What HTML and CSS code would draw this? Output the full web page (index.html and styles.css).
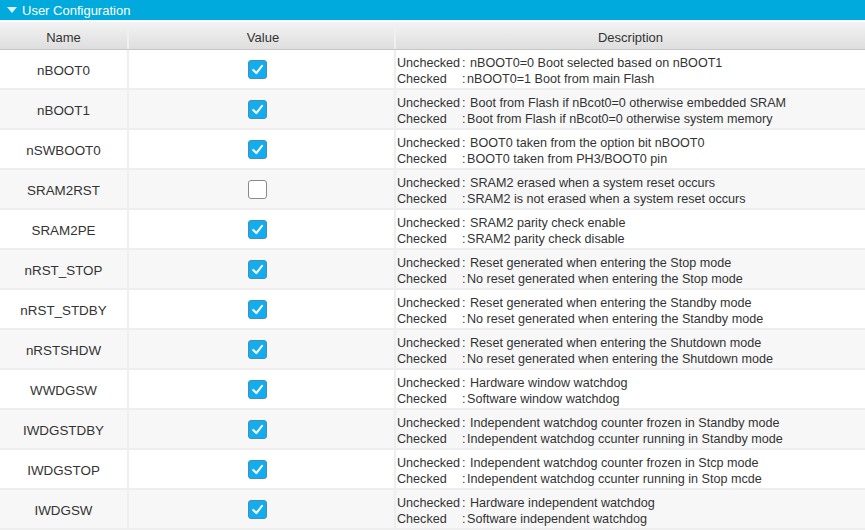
FILE: index.html
```html
<!DOCTYPE html>
<html>
<head>
<meta charset="utf-8">
<link rel="stylesheet" href="styles.css">
</head>
<body>
<div class="panel">
  <div class="titlebar"><span class="caret"></span><span class="title">User Configuration</span></div>
  <div class="table">
    <div class="row head">
      <div class="cell name">Name</div>
      <div class="cell value">Value</div>
      <div class="cell desc-h">Description</div>
    </div>

    <div class="row">
      <div class="cell name">nBOOT0</div>
      <div class="cell value"><span class="cb on"><svg viewBox="0 0 18 18"><path d="M4.5 9.5 L7.8 12.8 L13.8 5.2"/></svg></span></div>
      <div class="cell desc"><div class="line"><span class="lbl u">Unchecked<span class="c">:</span></span>nBOOT0=0 Boot selected based on nBOOT1</div><div class="line"><span class="lbl">Checked<span class="c">:</span></span>nBOOT0=1 Boot from main Flash</div></div>
    </div>
    <div class="row alt">
      <div class="cell name">nBOOT1</div>
      <div class="cell value"><span class="cb on"><svg viewBox="0 0 18 18"><path d="M4.5 9.5 L7.8 12.8 L13.8 5.2"/></svg></span></div>
      <div class="cell desc"><div class="line"><span class="lbl u">Unchecked<span class="c">:</span></span>Boot from Flash if nBcot0=0 otherwise embedded SRAM</div><div class="line"><span class="lbl">Checked<span class="c">:</span></span>Boot from Flash if nBcot0=0 otherwise system memory</div></div>
    </div>
    <div class="row">
      <div class="cell name">nSWBOOT0</div>
      <div class="cell value"><span class="cb on"><svg viewBox="0 0 18 18"><path d="M4.5 9.5 L7.8 12.8 L13.8 5.2"/></svg></span></div>
      <div class="cell desc"><div class="line"><span class="lbl u">Unchecked<span class="c">:</span></span>BOOT0 taken from the option bit nBOOT0</div><div class="line"><span class="lbl">Checked<span class="c">:</span></span>BOOT0 taken from PH3/BOOT0 pin</div></div>
    </div>
    <div class="row alt">
      <div class="cell name">SRAM2RST</div>
      <div class="cell value"><span class="cb"></span></div>
      <div class="cell desc"><div class="line"><span class="lbl u">Unchecked<span class="c">:</span></span>SRAM2 erased when a system reset occurs</div><div class="line"><span class="lbl">Checked<span class="c">:</span></span>SRAM2 is not erased when a system reset occurs</div></div>
    </div>
    <div class="row">
      <div class="cell name">SRAM2PE</div>
      <div class="cell value"><span class="cb on"><svg viewBox="0 0 18 18"><path d="M4.5 9.5 L7.8 12.8 L13.8 5.2"/></svg></span></div>
      <div class="cell desc"><div class="line"><span class="lbl u">Unchecked<span class="c">:</span></span>SRAM2 parity check enable</div><div class="line"><span class="lbl">Checked<span class="c">:</span></span>SRAM2 parity check disable</div></div>
    </div>
    <div class="row alt">
      <div class="cell name">nRST_STOP</div>
      <div class="cell value"><span class="cb on"><svg viewBox="0 0 18 18"><path d="M4.5 9.5 L7.8 12.8 L13.8 5.2"/></svg></span></div>
      <div class="cell desc"><div class="line"><span class="lbl u">Unchecked<span class="c">:</span></span>Reset generated when entering the Stop mode</div><div class="line"><span class="lbl">Checked<span class="c">:</span></span>No reset generated when entering the Stop mode</div></div>
    </div>
    <div class="row">
      <div class="cell name">nRST_STDBY</div>
      <div class="cell value"><span class="cb on"><svg viewBox="0 0 18 18"><path d="M4.5 9.5 L7.8 12.8 L13.8 5.2"/></svg></span></div>
      <div class="cell desc"><div class="line"><span class="lbl u">Unchecked<span class="c">:</span></span>Reset generated when entering the Standby mode</div><div class="line"><span class="lbl">Checked<span class="c">:</span></span>No reset generated when entering the Standby mode</div></div>
    </div>
    <div class="row alt">
      <div class="cell name">nRSTSHDW</div>
      <div class="cell value"><span class="cb on"><svg viewBox="0 0 18 18"><path d="M4.5 9.5 L7.8 12.8 L13.8 5.2"/></svg></span></div>
      <div class="cell desc"><div class="line"><span class="lbl u">Unchecked<span class="c">:</span></span>Reset generated when entering the Shutdown mode</div><div class="line"><span class="lbl">Checked<span class="c">:</span></span>No reset generated when entering the Shutdown mode</div></div>
    </div>
    <div class="row">
      <div class="cell name">WWDGSW</div>
      <div class="cell value"><span class="cb on"><svg viewBox="0 0 18 18"><path d="M4.5 9.5 L7.8 12.8 L13.8 5.2"/></svg></span></div>
      <div class="cell desc"><div class="line"><span class="lbl u">Unchecked<span class="c">:</span></span>Hardware window watchdog</div><div class="line"><span class="lbl">Checked<span class="c">:</span></span>Software window watchdog</div></div>
    </div>
    <div class="row alt">
      <div class="cell name">IWDGSTDBY</div>
      <div class="cell value"><span class="cb on"><svg viewBox="0 0 18 18"><path d="M4.5 9.5 L7.8 12.8 L13.8 5.2"/></svg></span></div>
      <div class="cell desc"><div class="line"><span class="lbl u">Unchecked<span class="c">:</span></span>Independent watchdog counter frozen in Standby mode</div><div class="line"><span class="lbl">Checked<span class="c">:</span></span>Independent watchdog ccunter running in Standby mode</div></div>
    </div>
    <div class="row">
      <div class="cell name">IWDGSTOP</div>
      <div class="cell value"><span class="cb on"><svg viewBox="0 0 18 18"><path d="M4.5 9.5 L7.8 12.8 L13.8 5.2"/></svg></span></div>
      <div class="cell desc"><div class="line"><span class="lbl u">Unchecked<span class="c">:</span></span>Independent watchdog counter frozen in Stcp mode</div><div class="line"><span class="lbl">Checked<span class="c">:</span></span>Independent watchdog ccunter running in Stop mcde</div></div>
    </div>
    <div class="row alt">
      <div class="cell name">IWDGSW</div>
      <div class="cell value"><span class="cb on"><svg viewBox="0 0 18 18"><path d="M4.5 9.5 L7.8 12.8 L13.8 5.2"/></svg></span></div>
      <div class="cell desc"><div class="line"><span class="lbl u">Unchecked<span class="c">:</span></span>Hardware independent watchdog</div><div class="line"><span class="lbl">Checked<span class="c">:</span></span>Software independent watchdog</div></div>
    </div>
  </div>
</div>
</body>
</html>
```

FILE: styles.css
```css
html, body {
  margin: 0;
  padding: 0;
  background: #ffffff;
}
body {
  font-family: "Liberation Sans", Arial, sans-serif;
  font-size: 12.6px;
  color: #333333;
  width: 865px;
  height: 531px;
  overflow: hidden;
}
.titlebar {
  height: 20px;
  background: #00aadd;
  display: flex;
  align-items: center;
  padding-left: 7px;
  gap: 5px;
  color: #ffffff;
  font-size: 13px;
}
.caret {
  width: 0;
  height: 0;
  border-left: 5px solid transparent;
  border-right: 5px solid transparent;
  border-top: 6px solid #ffffff;
  opacity: 0.85;
}
.table {
  margin-top: 2px;
}
.row {
  display: grid;
  grid-template-columns: 127px 265px 1fr;
  column-gap: 2px;
  background: #eeeeee;
  height: 40px;
}
.row > .cell {
  background: #ffffff;
  height: 38px;
  display: flex;
  align-items: center;
  box-sizing: border-box;
}
.row.alt > .cell {
  background: #f7f7f7;
}
.row.head {
  height: 28px;
  background: #f0f0f0;
  border-bottom: 1px solid #c6c6c6;
  box-sizing: border-box;
}
.row.head > .cell {
  height: 27px;
  background: linear-gradient(#f3f3f3, #dedede);
  justify-content: center;
  color: #333333;
  font-size: 13px;
  padding-top: 3px;
}
.row.head > .value {
  padding-right: 0;
  padding-left: 3px;
}
.name {
  justify-content: center;
  padding-top: 3px;
  font-size: 13.4px;
}
.value {
  justify-content: center;
  padding-right: 8px;
}
.desc {
  flex-direction: column;
  align-items: flex-start !important;
  justify-content: center;
  padding-left: 1px;
  padding-top: 3px;
  line-height: 16px;
}
.line {
  white-space: nowrap;
}
.lbl {
  display: inline-block;
  white-space: nowrap;
  width: 70px;
  position: relative;
}
.lbl.u {
  width: 73px;
}
.lbl .c {
  position: absolute;
  left: 65px;
  top: 0;
}
.cb {
  width: 17px;
  height: 17px;
  border: 1px solid #8a8a8a;
  border-radius: 3px;
  background: #ffffff;
  display: block;
}
.cb.on {
  background: #12adef;
  border-color: #4a8cb8;
}
.cb svg {
  width: 17px;
  height: 17px;
  display: block;
}
.cb svg path {
  fill: none;
  stroke: #ffffff;
  stroke-width: 2.2;
  stroke-linecap: round;
  stroke-linejoin: round;
}
```
